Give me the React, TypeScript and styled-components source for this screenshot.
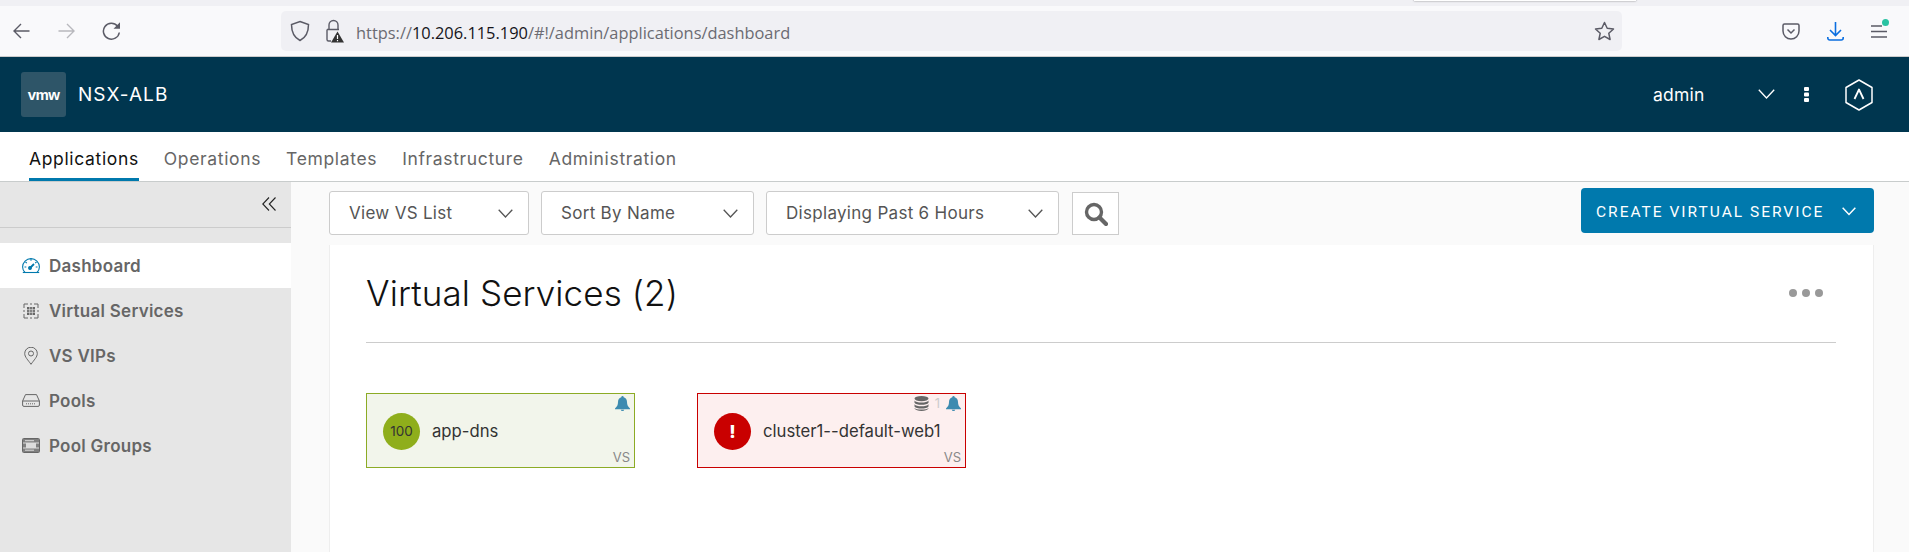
import React from "react";
import styled, { createGlobalStyle } from "styled-components";

const Global = createGlobalStyle`
  html, body { margin: 0; padding: 0; height: 100%; overflow: hidden; background: #fafafa; }
  #root { height: 552px; overflow: hidden; }
  * { box-sizing: border-box; }
`;

const brand = `Inter, "Open Sans", "Liberation Sans", sans-serif`;

const Page = styled.div`
  width: 1909px;
  height: 552px;
  display: flex;
  flex-direction: column;
  overflow: hidden;
  font-family: ${brand};
`;

const TabStrip = styled.div`
  height: 6px;
  flex: none;
  background: #f0f0f4;
  position: relative;
`;

const Popup = styled.div`
  position: absolute;
  left: 1414px;
  top: -2px;
  width: 222px;
  height: 3px;
  background: #fff;
  box-shadow: 0 0 2px rgba(0, 0, 0, 0.5);
`;

const BrowserBar = styled.div`
  height: 51px;
  flex: none;
  display: flex;
  align-items: center;
  background: #f9f9fb;
  border-bottom: 1px solid #ccc;
  padding: 0 20px 0 12px;
`;

const NavIcons = styled.div`
  display: flex;
  align-items: center;
  gap: 26px;
  width: 269px;
  flex: none;
`;

const AddressBar = styled.div`
  width: 1341px;
  height: 40px;
  flex: none;
  display: flex;
  align-items: center;
  background: #f0f0f4;
  border-radius: 5px;
  padding: 0 7px 0 9px;
`;

const UrlIcons = styled.div`
  display: flex;
  align-items: center;
  gap: 14px;
  margin-right: 12px;
`;

const Url = styled.div`
  flex: 1;
  padding-top: 3px;
  font: 16.4px "Open Sans", "Liberation Sans", sans-serif;
  color: #6b6b72;
  white-space: nowrap;
  b { font-weight: 400; color: #15141a; }
`;

const BrowserTools = styled.div`
  margin-left: 160px;
  display: flex;
  align-items: center;
  gap: 27px;
`;

const MenuWrap = styled.div`
  position: relative;
  display: flex;
`;

const GreenDot = styled.span`
  position: absolute;
  top: -6px;
  right: -2px;
  width: 7px;
  height: 7px;
  border-radius: 50%;
  background: #2ac3a2;
`;

const AppHeader = styled.header`
  height: 75px;
  flex: none;
  display: flex;
  align-items: center;
  background: #00364f;
  color: #fff;
  padding: 0 36px 0 21px;
`;

const Logo = styled.div`
  width: 45px;
  height: 45px;
  border-radius: 3px;
  background: #2e5568;
  display: flex;
  align-items: center;
  justify-content: center;
  font: 700 15px "Liberation Sans", sans-serif;
  letter-spacing: -0.6px;
  margin-right: 12px;
`;

const Brand = styled.div`
  font-size: 19px;
  font-weight: 400;
  letter-spacing: 1.05px;
  flex: 1;
`;

const User = styled.div`
  font-size: 17.5px;
  letter-spacing: 0.2px;
  width: 105px;
`;

const ChevronSlot = styled.div`
  display: flex;
  margin-right: 29px;
`;

const KebabSlot = styled.div`
  display: flex;
  margin-right: 36px;
`;

const TabBar = styled.nav`
  height: 50px;
  flex: none;
  display: flex;
  gap: 25px;
  background: #fff;
  border-bottom: 1px solid #c8cccc;
  padding-left: 29px;
`;

const Tab = styled.div<{ $active?: boolean }>`
  height: 49px;
  display: flex;
  align-items: center;
  padding-top: 6px;
  font-size: 17.5px;
  letter-spacing: 0.65px;
  color: ${(p) => (p.$active ? "#111" : "#666")};
  border-bottom: 3px solid ${(p) => (p.$active ? "#0079ad" : "transparent")};
`;

const Body = styled.div`
  flex: 1;
  display: flex;
  min-height: 0;
`;

const Sidebar = styled.aside`
  width: 291px;
  flex: none;
  background: #e6e6e6;
`;

const Collapse = styled.div`
  height: 46px;
  display: flex;
  align-items: center;
  justify-content: flex-end;
  padding: 0 15px 2px 0;
  border-bottom: 1px solid #ccc;
  margin-bottom: 15px;
`;

const SideItem = styled.div<{ $active?: boolean }>`
  height: 45px;
  display: flex;
  align-items: center;
  gap: 9px;
  padding-left: 22px;
  font-size: 17px;
  letter-spacing: 0.25px;
  font-weight: 600;
  color: #666;
  background: ${(p) => (p.$active ? "#fff" : "transparent")};
`;

const SideIcon = styled.span`
  width: 18px;
  display: flex;
  justify-content: center;
  flex: none;
`;

const Main = styled.main`
  flex: 1;
  min-width: 0;
  padding: 6px 35px 0 38px;
  background: #fafafa;
`;

const Controls = styled.div`
  height: 57px;
  display: flex;
  align-items: flex-start;
`;

const Dropdown = styled.div<{ $w: number }>`
  width: ${(p) => p.$w}px;
  height: 44px;
  margin-top: 3px;
  margin-right: 12px;
  display: flex;
  align-items: center;
  justify-content: space-between;
  padding: 0 15px 0 19px;
  background: #fff;
  border: 1px solid #ccc;
  border-radius: 3px;
  font-size: 17px;
  letter-spacing: 0.3px;
  color: #555;
`;

const SearchButton = styled.div`
  width: 47px;
  height: 43px;
  margin-top: 4px;
  margin-left: 1px;
  display: flex;
  align-items: center;
  justify-content: center;
  background: #fff;
  border: 1px solid #ccc;
`;

const CreateButton = styled.div`
  margin-left: auto;
  width: 293px;
  height: 45px;
  display: flex;
  align-items: center;
  justify-content: space-between;
  padding: 2px 18px 0 15px;
  background: #0079ad;
  border-radius: 4px;
  color: #fff;
  font: 15.5px Roboto, "Liberation Sans", sans-serif;
  letter-spacing: 2px;
`;

const Card = styled.section`
  height: 307px;
  padding: 0 37px 0 36px;
  background: #fff;
  border-right: 1px solid #eee;
  border-left: 1px solid #eee;
`;

const CardHead = styled.div`
  height: 98px;
  display: flex;
  align-items: center;
  justify-content: space-between;
  border-bottom: 1px solid #ccc;
  padding-bottom: 2px;
`;

const CardTitle = styled.h1`
  margin: 0;
  font-size: 35px;
  font-weight: 300;
  letter-spacing: 0.1px;
  color: #111;
`;

const Dots = styled.div`
  display: flex;
  gap: 5px;
  margin-right: 13px;
  span {
    width: 8px;
    height: 8px;
    border-radius: 50%;
    background: #999;
  }
`;

const Tiles = styled.div`
  display: flex;
  gap: 62px;
  padding-top: 50px;
`;

const Tile = styled.div<{ $bad?: boolean }>`
  width: 269px;
  height: 75px;
  display: flex;
  flex-direction: column;
  padding: 1px 4px 0 16px;
  border: 1px solid ${(p) => (p.$bad ? "#c90000" : "#8cab25")};
  background: ${(p) => (p.$bad ? "#fdefef" : "#f2f5eb")};
`;

const TileTop = styled.div`
  height: 16px;
  display: flex;
  justify-content: flex-end;
  align-items: center;
  gap: 6px;
  font-size: 13px;
  color: #ccc;
`;

const TileMain = styled.div`
  height: 38px;
  margin-top: 1px;
  display: flex;
  align-items: center;
  gap: 12px;
  font-size: 16.7px;
  color: #333;
`;

const Health = styled.div<{ $bad?: boolean }>`
  width: 37px;
  height: 37px;
  border-radius: 50%;
  flex: none;
  display: flex;
  align-items: center;
  justify-content: center;
  background: ${(p) => (p.$bad ? "#c90000" : "#8fae1b")};
  color: ${(p) => (p.$bad ? "#fff" : "#333")};
  font-size: ${(p) => (p.$bad ? "18px" : "13.5px")};
  font-weight: ${(p) => (p.$bad ? 800 : 400)};
`;

const TileType = styled.div`
  align-self: flex-end;
  font-size: 13px;
  line-height: 14px;
  color: #888;
`;

const Arrow = ({ color, flip }: { color: string; flip?: boolean }) => (
  <svg width="19" height="18" viewBox="0 0 19 18" fill="none" stroke={color} strokeWidth="1.4" style={flip ? { transform: "scaleX(-1)" } : undefined}>
    <path d="M17.500 9H2M9 2 2 9l7 7" />
  </svg>
);

const Reload = () => (
  <svg width="19" height="20" viewBox="0 0 19 20" fill="none">
    <path d="M15.500 5A8 8 0 1 0 17.300 11.500" stroke="#5b5b66" strokeWidth="1.5" />
    <path d="M18 1.200V7.800H11.500Z" fill="#5b5b66" />
  </svg>
);

const Shield = () => (
  <svg width="20" height="22" viewBox="0 0 20 22" fill="none" stroke="#5b5b66" strokeWidth="1.5">
    <path d="M10 1.500 18.500 4.500C18.500 12 16 17.500 10 20.500 4 17.500 1.500 12 1.500 4.500Z" />
  </svg>
);

const Lock = () => (
  <svg width="20" height="24" viewBox="0 0 20 24">
    <path d="M5 10V6a4.500 4.500 0 0 1 9 0v4M3 10.500h12M3 10.500v10a1.500 1.500 0 0 0 1.500 1.500H7" fill="none" stroke="#5b5b66" strokeWidth="1.4" />
    <path d="M13.500 12.500 20 23.500H7Z" fill="#333" />
    <path d="M13.500 16v4M13.500 21v1.200" stroke="#fff" strokeWidth="1.200" />
  </svg>
);

const Star = () => (
  <svg width="21" height="20" viewBox="0 0 21 20" fill="none" stroke="#5b5b66" strokeWidth="1.500" strokeLinejoin="round">
    <path d="M10.500 1.500 13.200 7.300 19.500 8 14.800 12.300 16.100 18.500 10.500 15.300 4.900 18.500 6.200 12.300 1.500 8 7.800 7.300Z" />
  </svg>
);

const Pocket = () => (
  <svg width="18" height="17" viewBox="0 0 18 17" fill="none" stroke="#5b5b66" strokeWidth="1.500">
    <path d="M2.500 1h13A1.500 1.500 0 0 1 17 2.500V8a8 8 0 0 1-16 0V2.500A1.500 1.500 0 0 1 2.500 1Z" />
    <path d="M5.500 6.500 9 10l3.500-3.500" />
  </svg>
);

const Download = () => (
  <svg width="17" height="19" viewBox="0 0 17 19" fill="none" stroke="#0a6ee0" strokeWidth="1.600">
    <path d="M8.500 0v13M3 8l5.500 5.500L14 8" />
    <path d="M.8 15v1a2 2 0 0 0 2 2h11.400a2 2 0 0 0 2-2v-1" />
  </svg>
);

const Hamburger = () => (
  <svg width="16" height="13" viewBox="0 0 16 13" fill="none" stroke="#5b5b66" strokeWidth="1.400">
    <path d="M0 1h11M0 6.500h16M0 12h16" />
  </svg>
);

const Chevron = ({ color = "#555", width = 15, sw = 1.3 }: { color?: string; width?: number; sw?: number }) => (
  <svg width={width} height={width * 0.6} viewBox="0 0 15 9" fill="none" stroke={color} strokeWidth={sw}>
    <path d="M.7.7 7.500 8 14.300.7" />
  </svg>
);

const Kebab = () => (
  <svg width="5" height="15" viewBox="0 0 5 15" fill="#fff">
    <rect width="5" height="4" y="0" rx="1" />
    <rect width="5" height="4" y="5.500" rx="1" />
    <rect width="5" height="4" y="11" rx="1" />
  </svg>
);

const Hexagon = () => (
  <svg width="28" height="32" viewBox="0 0 28 32" fill="none" stroke="#fff" strokeWidth="1.500" strokeLinejoin="round">
    <path d="M14 1 27 8.500v15L14 31 1 23.500v-15Z" />
    <path d="M9.500 20 14 10.500 18.500 20" strokeWidth="1.800" />
  </svg>
);

const DoubleChevron = () => (
  <svg width="14" height="14" viewBox="0 0 14 14" fill="none" stroke="#222" strokeWidth="1.100">
    <path d="M7 .5.800 7 7 13.500M13.500.5 7.300 7l6.200 6.500" />
  </svg>
);

const Gauge = () => (
  <svg width="18" height="16" viewBox="0 0 18 16" fill="none" stroke="#0079ad" strokeWidth="1.100">
    <path d="M3 14.500C1.500 13 .6 11 .6 9a8.400 8.400 0 0 1 16.800 0c0 2-.9 4-2.400 5.500Z" />
    <path d="M.8 14.500h16.400" />
    <path d="M9 .8v2M2.500 9h1.800M13.700 9h1.800M3.500 4l1.300 1.200M14.500 4l-1.300 1.200" />
    <path d="M7.500 10.500 12 6" strokeWidth="1.800" />
    <circle cx="8" cy="10" r="1.400" fill="#0079ad" />
  </svg>
);

const ServicesIcon = () => (
  <svg width="16" height="16" viewBox="0 0 16 16" fill="none" stroke="#666" strokeWidth="1">
    <path d="M1 5V1h4M11 1h4v4M15 11v4h-4M5 15H1v-4M7 1h2M7 15h2M1 7v2M15 7v2" />
    <path d="M4 4h8v8H4Z" fill="#666" stroke="none" />
    <path d="M6.700 4v8M9.300 4v8M4 6.700h8M4 9.300h8" stroke="#e6e6e6" strokeWidth=".7" />
  </svg>
);

const Pin = () => (
  <svg width="14" height="18" viewBox="0 0 14 18" fill="none" stroke="#666" strokeWidth="1">
    <path d="M7 17.300C4 13 .7 10 .7 6.500a6.300 6.300 0 0 1 12.600 0C13.300 10 10 13 7 17.300Z" />
    <circle cx="7" cy="6.500" r="2.500" />
  </svg>
);

const PoolIcon = () => (
  <svg width="18" height="13" viewBox="0 0 18 13" fill="none" stroke="#666" strokeWidth="1">
    <path d="M3.500.6h11L17.400 7v4a1.400 1.400 0 0 1-1.400 1.400H2A1.400 1.400 0 0 1 .6 11V7Z" />
    <path d="M.8 7h16.400" />
    <path d="M4 9.800h10" strokeDasharray="1 1" />
  </svg>
);

const GroupIcon = () => (
  <svg width="18" height="15" viewBox="0 0 18 15">
    <rect x=".5" y=".5" width="17" height="14" rx="1" fill="#dcdcdc" stroke="#666" />
    <path d="M1 1h16v3.500H1ZM1 5.500h3v4H1ZM14 5.500h3v4h-3ZM1 10.500h16V14H1Z" fill="#808080" />
    <path d="M3 2.700h9M3 12.200h9" stroke="#ddd" />
  </svg>
);

const SearchIcon = () => (
  <svg width="24" height="24" viewBox="0 0 24 24" fill="none" stroke="#666">
    <circle cx="10" cy="10" r="7.500" strokeWidth="3.400" />
    <path d="m15.500 15.500 6.500 6.500" strokeWidth="4.200" strokeLinecap="round" />
  </svg>
);

const Bell = () => (
  <svg width="15" height="15" viewBox="0 0 15 15" fill="#3d8bb0">
    <path d="M7.500 0A1.200 1.200 0 0 1 8.700 1.200C11 1.800 12 3.800 12 6c0 3 1 4.500 3 6.500v.8H0v-.8C2 10.500 3 9 3 6c0-2.200 1-4.200 3.300-4.800A1.200 1.200 0 0 1 7.500 0ZM5.800 13.800h3.400a1.700 1.200 0 0 1-3.400 0Z" />
  </svg>
);

const Database = () => (
  <svg width="15" height="15" viewBox="0 0 15 15" fill="#666">
    <ellipse cx="7.500" cy="2.600" rx="7" ry="2.600" />
    <path d="M.5 4.400c1 1.400 3.500 2 7 2s6-.6 7-2v2.400c-1 1.500-3.500 2-7 2s-6-.5-7-2ZM.5 8.300c1 1.400 3.500 2 7 2s6-.6 7-2v2.200c-1 1.500-3.500 2-7 2s-6-.5-7-2ZM.5 12c1 1.200 3.500 1.600 7 1.600s6-.4 7-1.600v.6c-1 1.600-3.500 2.400-7 2.400s-6-.8-7-2.400Z" />
  </svg>
);

const sideItems = [
  { label: "Dashboard", icon: <Gauge />, active: true },
  { label: "Virtual Services", icon: <ServicesIcon /> },
  { label: "VS VIPs", icon: <Pin /> },
  { label: "Pools", icon: <PoolIcon /> },
  { label: "Pool Groups", icon: <GroupIcon /> },
];

export default function App() {
  return (
    <Page>
      <Global />
      <TabStrip>
        <Popup />
      </TabStrip>
      <BrowserBar>
        <NavIcons>
          <Arrow color="#5b5b66" />
          <Arrow color="#b8b8bd" flip />
          <Reload />
        </NavIcons>
        <AddressBar>
          <UrlIcons>
            <Shield />
            <Lock />
          </UrlIcons>
          <Url>
            https://<b>10.206.115.190</b>/#!/admin/applications/dashboard
          </Url>
          <Star />
        </AddressBar>
        <BrowserTools>
          <Pocket />
          <Download />
          <MenuWrap>
            <Hamburger />
            <GreenDot />
          </MenuWrap>
        </BrowserTools>
      </BrowserBar>
      <AppHeader>
        <Logo>vmw</Logo>
        <Brand>NSX-ALB</Brand>
        <User>admin</User>
        <ChevronSlot>
          <Chevron color="#fff" width={17} sw={1.2} />
        </ChevronSlot>
        <KebabSlot>
          <Kebab />
        </KebabSlot>
        <Hexagon />
      </AppHeader>
      <TabBar>
        <Tab $active>Applications</Tab>
        <Tab>Operations</Tab>
        <Tab>Templates</Tab>
        <Tab>Infrastructure</Tab>
        <Tab>Administration</Tab>
      </TabBar>
      <Body>
        <Sidebar>
          <Collapse>
            <DoubleChevron />
          </Collapse>
          {sideItems.map((s) => (
            <SideItem key={s.label} $active={s.active}>
              <SideIcon>{s.icon}</SideIcon>
              {s.label}
            </SideItem>
          ))}
        </Sidebar>
        <Main>
          <Controls>
            <Dropdown $w={200}>
              View VS List
              <Chevron />
            </Dropdown>
            <Dropdown $w={213}>
              Sort By Name
              <Chevron />
            </Dropdown>
            <Dropdown $w={293}>
              Displaying Past 6 Hours
              <Chevron />
            </Dropdown>
            <SearchButton>
              <SearchIcon />
            </SearchButton>
            <CreateButton>
              CREATE VIRTUAL SERVICE
              <Chevron color="#fff" width={14} sw={1.6} />
            </CreateButton>
          </Controls>
          <Card>
            <CardHead>
              <CardTitle>Virtual Services (2)</CardTitle>
              <Dots>
                <span />
                <span />
                <span />
              </Dots>
            </CardHead>
            <Tiles>
              <Tile>
                <TileTop>
                  <Bell />
                </TileTop>
                <TileMain>
                  <Health>100</Health>
                  app-dns
                </TileMain>
                <TileType>VS</TileType>
              </Tile>
              <Tile $bad>
                <TileTop>
                  <Database />1
                  <Bell />
                </TileTop>
                <TileMain>
                  <Health $bad>!</Health>
                  cluster1--default-web1
                </TileMain>
                <TileType>VS</TileType>
              </Tile>
            </Tiles>
          </Card>
        </Main>
      </Body>
    </Page>
  );
}
